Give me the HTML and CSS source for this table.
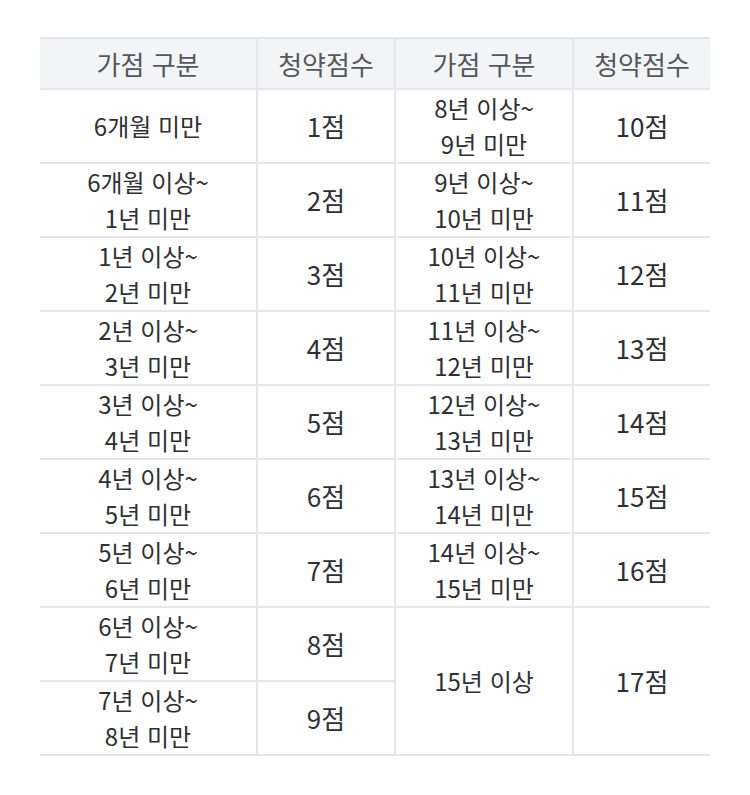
FILE: index.html
```html
<!DOCTYPE html>
<html lang="ko">
<head>
<meta charset="utf-8">
<link rel="stylesheet" href="styles.css">
</head>
<body>
<table class="score-table">
  <colgroup>
    <col class="c1"><col class="c2"><col class="c3"><col class="c4">
  </colgroup>
  <thead>
    <tr>
      <th>가점 구분</th><th>청약점수</th><th>가점 구분</th><th>청약점수</th>
    </tr>
  </thead>
  <tbody>
    <tr><td class="range">6개월 미만</td><td class="pt">1점</td><td class="range">8년 이상~<br>9년 미만</td><td class="pt">10점</td></tr>
    <tr><td class="range">6개월 이상~<br>1년 미만</td><td class="pt">2점</td><td class="range">9년 이상~<br>10년 미만</td><td class="pt">11점</td></tr>
    <tr><td class="range">1년 이상~<br>2년 미만</td><td class="pt">3점</td><td class="range">10년 이상~<br>11년 미만</td><td class="pt">12점</td></tr>
    <tr><td class="range">2년 이상~<br>3년 미만</td><td class="pt">4점</td><td class="range">11년 이상~<br>12년 미만</td><td class="pt">13점</td></tr>
    <tr><td class="range">3년 이상~<br>4년 미만</td><td class="pt">5점</td><td class="range">12년 이상~<br>13년 미만</td><td class="pt">14점</td></tr>
    <tr><td class="range">4년 이상~<br>5년 미만</td><td class="pt">6점</td><td class="range">13년 이상~<br>14년 미만</td><td class="pt">15점</td></tr>
    <tr><td class="range">5년 이상~<br>6년 미만</td><td class="pt">7점</td><td class="range">14년 이상~<br>15년 미만</td><td class="pt">16점</td></tr>
    <tr><td class="range">6년 이상~<br>7년 미만</td><td class="pt">8점</td><td class="range" rowspan="2">15년 이상</td><td class="pt" rowspan="2">17점</td></tr>
    <tr><td class="range">7년 이상~<br>8년 미만</td><td class="pt">9점</td></tr>
  </tbody>
</table>
</body>
</html>
```
FILE: styles.css
```css
html, body {
  margin: 0;
  background: #ffffff;
}
body {
  padding: 37px 40px 0 40px;
  font-family: "Noto Sans CJK KR", "Noto Sans", sans-serif;
  color: #2f3033;
}
.score-table {
  width: 670px;
  border-collapse: collapse;
  table-layout: fixed;
  border-top: 2px solid #e4e6ea;
}
.c1 { width: 217px; }
.c2 { width: 138px; }
.c3 { width: 178px; }
.c4 { width: 137px; }
.score-table th,
.score-table td {
  padding: 0;
  text-align: center;
  vertical-align: middle;
  border-bottom: 2px solid #e4e6ea;
  border-left: 2px solid #e4e6ea;
}
.score-table th:first-child,
.score-table tbody tr td:first-child {
  border-left: none;
}
.score-table thead tr {
  height: 51px;
}
.score-table th {
  background: #f3f4f6;
  font-weight: 400;
  font-size: 26px;
  line-height: 36px;
  color: #54585e;
}
.score-table tbody tr {
  height: 73.4px;
}
.range {
  font-size: 24px;
  line-height: 36px;
}
.pt {
  font-size: 26px;
  line-height: 36px;
}
```
